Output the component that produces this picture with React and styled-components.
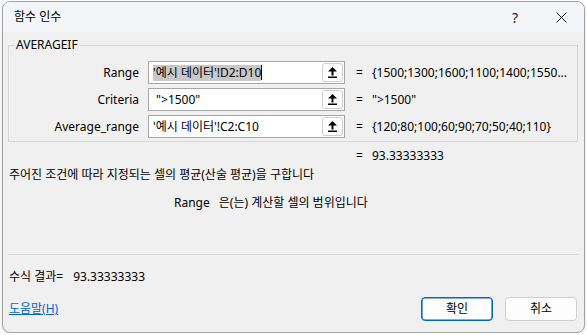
import React from "react";
import styled, { createGlobalStyle } from "styled-components";

const GlobalStyle = createGlobalStyle`
  html, body {
    margin: 0;
    padding: 0;
    background: #ffffff;
  }
  body {
    font-family: "Noto Sans", "Noto Sans CJK KR", sans-serif;
    font-size: 12px;
    color: #000;
  }
`;

const Window = styled.div`
  box-sizing: border-box;
  width: 583px;
  height: 332px;
  margin: 1px 0 0 2px;
  border: 1px solid #a3a3a3;
  border-radius: 8px;
  background: #f0f0f0;
  overflow: hidden;
  display: flex;
  flex-direction: column;
  box-shadow: 0 1px 3px rgba(0, 0, 0, 0.15);
`;

const TitleBar = styled.div`
  height: 30px;
  flex: none;
  display: flex;
  align-items: center;
  background: #f3f5f9;
  padding-left: 11px;
`;

const Title = styled.div`
  flex: 1;
  line-height: 16px;
`;

const CaptionButton = styled.div`
  width: 46px;
  height: 30px;
  display: flex;
  align-items: center;
  justify-content: center;
  font-size: 14px;
  color: #1a1a1a;
`;

const Body = styled.div`
  flex: 1;
  display: flex;
  flex-direction: column;
  padding: 5px 6px 9px 5px;
  line-height: 16px;
`;

const Group = styled.fieldset`
  margin: 0;
  border: 1px solid #d6d6d6;
  padding: 8px 0 3px 6px;
  display: grid;
  grid-template-columns: 133px 197px 27px 1fr;
  row-gap: 4px;
  align-items: center;
`;

const Legend = styled.legend`
  padding: 0 1px;
  line-height: 16px;
`;

const Label = styled.div`
  text-align: right;
  padding-right: 9px;
`;

const InputBox = styled.div`
  box-sizing: border-box;
  height: 23px;
  display: flex;
  align-items: center;
  background: #ffffff;
  border: 1px solid #a6a6a6;
  padding: 1px 1px 1px 4px;
`;

const InputText = styled.div`
  flex: 1;
  white-space: pre;
  overflow: hidden;
  display: flex;
  align-items: center;
`;

const Selected = styled.span`
  background: #c8c8c8;
`;

const Caret = styled.span`
  display: inline-block;
  width: 1px;
  height: 15px;
  background: #000;
`;

const RefButton = styled.div`
  box-sizing: border-box;
  width: 21px;
  height: 19px;
  border: 1px solid #cfcfcf;
  border-radius: 3px;
  background: #ffffff;
  display: flex;
  align-items: center;
  justify-content: center;
`;

const Eq = styled.div`
  padding-left: 11px;
`;

const Value = styled.div`
  white-space: nowrap;
  overflow: hidden;
`;

const ResultRow = styled.div`
  margin-top: 6px;
  display: grid;
  grid-template-columns: 337px 27px 1fr;
`;

const Description = styled.div`
  margin-top: 3px;
  padding-left: 1px;
`;

const ArgHelp = styled.div`
  margin-top: 12px;
  padding-left: 166px;
  display: flex;
  gap: 9px;
`;

const Separator = styled.div`
  margin-top: 43px;
  height: 1px;
  background: #d9d9d9;
`;

const FormulaResult = styled.div`
  margin-top: 14px;
  padding-left: 1px;
  display: flex;
  gap: 10px;
`;

const Footer = styled.div`
  margin-top: 12px;
  display: flex;
  align-items: center;
  gap: 12px;
  padding-right: 1px;
`;

const HelpLink = styled.a`
  flex: 1;
  padding-left: 1px;
  color: #0066cc;
  text-decoration: underline;
`;

const Button = styled.div`
  box-sizing: border-box;
  width: 72px;
  height: 24px;
  display: flex;
  align-items: center;
  justify-content: center;
  background: #fdfdfd;
  border-radius: 4px;
  border: 1px solid ${(p) => (p.primary ? "#0067c0" : "#d0d0d0")};
  box-shadow: ${(p) => (p.primary ? "inset 0 0 0 0.6px #0067c0" : "none")};
`;

const RefIcon = () => (
  <svg width="9" height="11" viewBox="0 0 9 11">
    <polygon points="4.5,0 0,4.5 9,4.5" fill="#000" />
    <rect x="3.5" y="4" width="2" height="4.5" fill="#000" />
    <rect x="0" y="9.5" width="9" height="1.5" fill="#000" />
  </svg>
);

const CloseIcon = () => (
  <svg width="11" height="11" viewBox="0 0 11 11">
    <path d="M0.5 0.5 L10.5 10.5 M10.5 0.5 L0.5 10.5" stroke="#1a1a1a" strokeWidth="1" />
  </svg>
);

const args = [
  {
    label: "Range",
    text: (
      <>
        <Selected>'예시 데이터'!D2:D10</Selected>
        <Caret />
      </>
    ),
    value: "{1500;1300;1600;1100;1400;1550...",
  },
  { label: "Criteria", text: ' ">1500"', value: '">1500"' },
  { label: "Average_range", text: "'예시 데이터'!C2:C10", value: "{120;80;100;60;90;70;50;40;110}" },
];

export default function App() {
  return (
    <>
      <GlobalStyle />
      <Window>
        <TitleBar>
          <Title>함수 인수</Title>
          <CaptionButton>?</CaptionButton>
          <CaptionButton>
            <CloseIcon />
          </CaptionButton>
        </TitleBar>
        <Body>
          <Group>
            <Legend>AVERAGEIF</Legend>
            {args.map((a) => (
              <React.Fragment key={a.label}>
                <Label>{a.label}</Label>
                <InputBox>
                  <InputText>{a.text}</InputText>
                  <RefButton>
                    <RefIcon />
                  </RefButton>
                </InputBox>
                <Eq>=</Eq>
                <Value>{a.value}</Value>
              </React.Fragment>
            ))}
          </Group>
          <ResultRow>
            <span />
            <Eq>=</Eq>
            <Value>93.33333333</Value>
          </ResultRow>
          <Description>주어진 조건에 따라 지정되는 셀의 평균(산술 평균)을 구합니다</Description>
          <ArgHelp>
            <span>Range</span>
            <span>은(는) 계산할 셀의 범위입니다</span>
          </ArgHelp>
          <Separator />
          <FormulaResult>
            <span>수식 결과=</span>
            <span>93.33333333</span>
          </FormulaResult>
          <Footer>
            <HelpLink>도움말(H)</HelpLink>
            <Button primary>확인</Button>
            <Button>취소</Button>
          </Footer>
        </Body>
      </Window>
    </>
  );
}
